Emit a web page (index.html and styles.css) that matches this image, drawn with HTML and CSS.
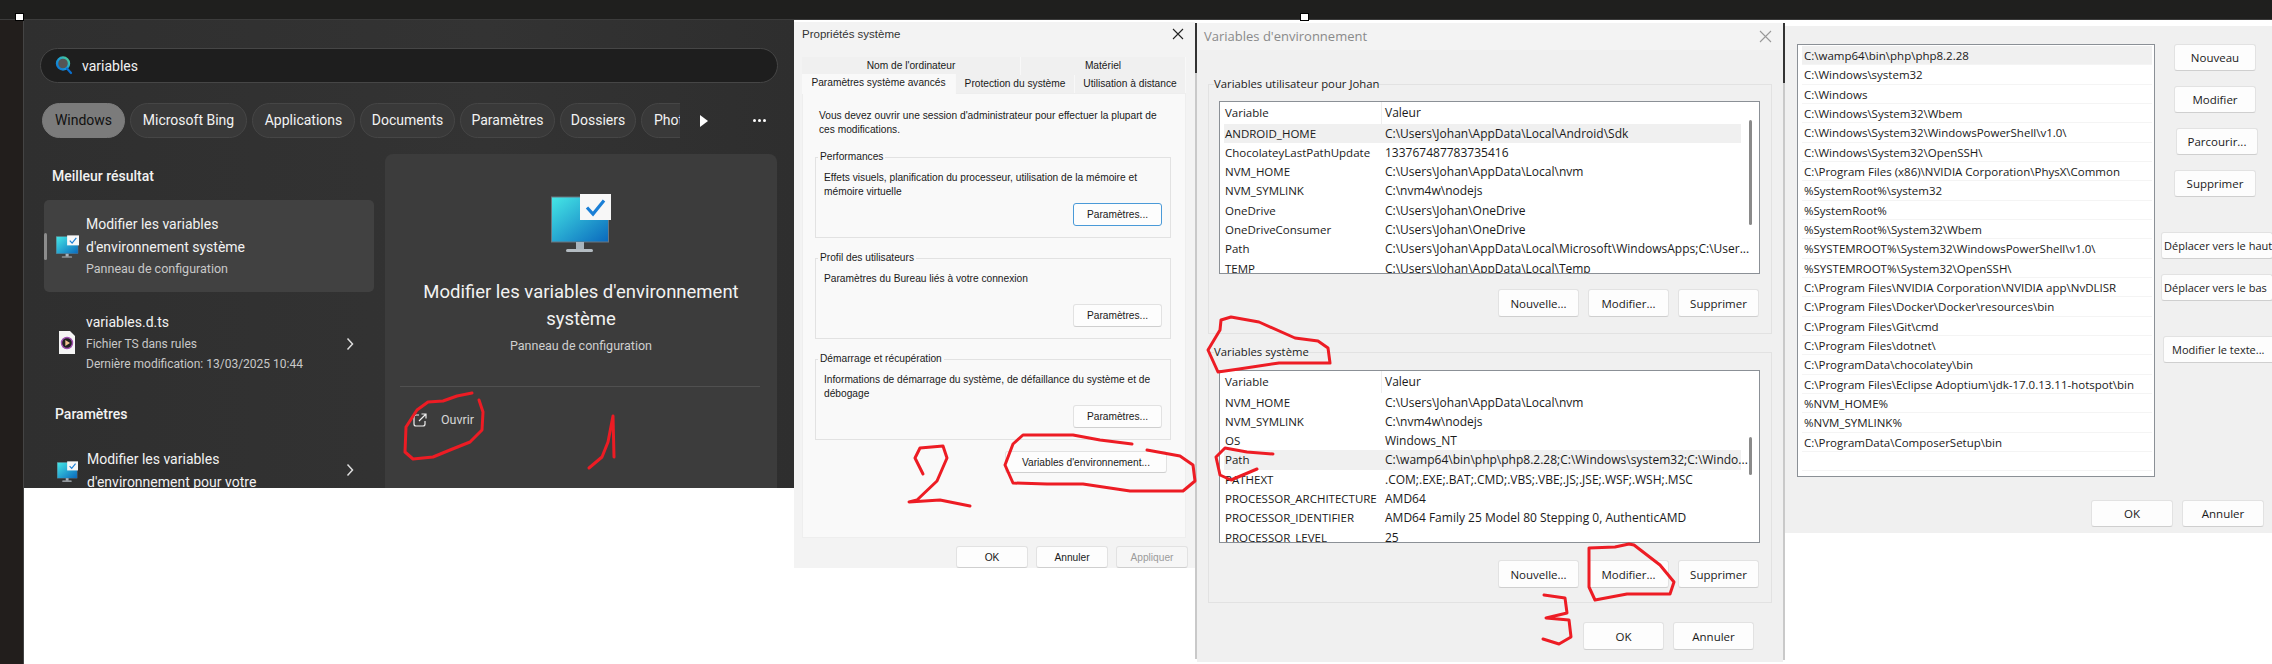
FILE: index.html
```html
<!DOCTYPE html>
<html lang="fr">
<head>
  <meta charset="UTF-8">
  <title>Variables d'environnement</title>
  <link rel="stylesheet" href="styles.css">
</head>
<body>
  <svg class="defs" width="0" height="0">
    <defs>
      <linearGradient id="screen" x1="0" y1="0" x2="1" y2="1">
        <stop offset="0" stop-color="#45e8e6"/>
        <stop offset="1" stop-color="#0a68bd"/>
      </linearGradient>
      <linearGradient id="lens" x1="1" y1="0" x2="0" y2="1">
        <stop offset="0" stop-color="#4fd08a"/>
        <stop offset="0.5" stop-color="#1c9fd8"/>
        <stop offset="1" stop-color="#0a70d0"/>
      </linearGradient>
      <symbol id="monitor" viewBox="0 0 60 58">
        <rect x="0.5" y="3" width="57" height="45" fill="url(#screen)" stroke="#6b7680"/>
        <rect x="25" y="48" width="8" height="7" fill="#a9b4bc"/>
        <rect x="15" y="55" width="27" height="3" rx="1.5" fill="#b4bcc2"/>
        <rect x="29" y="0" width="31" height="26" fill="#f7f7f7"/>
        <path d="M36 13.5 L42 20 L53 6.5" fill="none" stroke="#1a7fd6" stroke-width="3.2"/>
      </symbol>
    </defs>
  </svg>

  <header class="topbar">
    <span class="handle handle-left"></span>
    <span class="handle handle-mid"></span>
  </header>

  <main class="desktop">
    <div class="strip"></div>

    <section class="search-panel">
      <div class="searchbox">
        <svg class="lens" width="20" height="22" viewBox="0 0 20 22">
          <circle cx="9" cy="8.5" r="6" fill="#555" stroke="url(#lens)" stroke-width="2.4"/>
          <path d="M13 13.5 L17 18" stroke="#0a70d0" stroke-width="2.2" stroke-linecap="round"/>
        </svg>
        <span>variables</span>
      </div>

      <div class="chip-row">
        <div class="chips">
          <span class="chip chip-on chip-windows">Windows</span>
          <span class="chip chip-bing">Microsoft Bing</span>
          <span class="chip chip-apps">Applications</span>
          <span class="chip chip-docs">Documents</span>
          <span class="chip chip-params">Paramètres</span>
          <span class="chip chip-dirs">Dossiers</span>
          <span class="chip chip-photos">Photos</span>
        </div>
        <svg class="more-arrow" width="10" height="14" viewBox="0 0 10 14"><path d="M1 1 L9 7 L1 13 Z" fill="#fff"/></svg>
        <span class="more-dots"><i></i><i></i><i></i></span>
      </div>

      <div class="results">
        <div class="res-col">
          <h3 class="res-head">Meilleur résultat</h3>
          <div class="res-card">
            <span class="res-mark"></span>
            <svg class="res-icon" width="23" height="23"><use href="#monitor"/></svg>
            <div class="res-text">
              <div class="res-line">Modifier les variables</div>
              <div class="res-line">d'environnement système</div>
              <div class="res-sub">Panneau de configuration</div>
            </div>
          </div>

          <div class="res-item res-file">
            <svg class="file-icon" width="16" height="23" viewBox="0 0 16 23">
              <path d="M0 0 H11 L16 5 V23 H0 Z" fill="#f5f5f5"/>
              <circle cx="8" cy="12" r="5.5" fill="#222" stroke="#a050b0" stroke-width="1.4"/>
              <path d="M6.3 9 L11 12 L6.3 15 Z" fill="#f0c090"/>
            </svg>
            <div class="res-text">
              <div class="res-line">variables.d.ts</div>
              <div class="res-sub">Fichier TS dans rules</div>
              <div class="res-sub">Dernière modification: 13/03/2025 10:44</div>
            </div>
            <svg class="chev" width="8" height="14" viewBox="0 0 8 14"><path d="M1.5 1.5 L6.5 7 L1.5 12.5" fill="none" stroke="#ddd" stroke-width="1.5"/></svg>
          </div>

          <h3 class="res-head2">Paramètres</h3>
          <div class="res-item res-env">
            <svg class="res-icon" width="21" height="23"><use href="#monitor"/></svg>
            <div class="res-text">
              <div class="res-line">Modifier les variables</div>
              <div class="res-line">d'environnement pour votre</div>
            </div>
            <svg class="chev" width="8" height="14" viewBox="0 0 8 14"><path d="M1.5 1.5 L6.5 7 L1.5 12.5" fill="none" stroke="#ddd" stroke-width="1.5"/></svg>
          </div>
        </div>

        <div class="preview">
          <svg class="preview-icon" width="60" height="58"><use href="#monitor"/></svg>
          <div class="preview-title">Modifier les variables d'environnement système</div>
          <div class="preview-sub">Panneau de configuration</div>
          <div class="preview-rule"></div>
          <div class="preview-open">
            <svg width="14" height="14" viewBox="0 0 14 14">
              <path d="M6 2 H3 a2 2 0 0 0 -2 2 V11 a2 2 0 0 0 2 2 H10 a2 2 0 0 0 2 -2 V8" fill="none" stroke="#eee" stroke-width="1.2"/>
              <path d="M6 8 L13 1 M8.5 1 H13 V5.5" fill="none" stroke="#eee" stroke-width="1.2"/>
            </svg>
            <span>Ouvrir</span>
          </div>
        </div>
      </div>
    </section>

    <section class="dlg sys">
      <div class="dlg-title">
        <span>Propriétés système</span>
        <svg width="12" height="12" viewBox="0 0 12 12"><path d="M1 1 L11 11 M11 1 L1 11" stroke="#222" stroke-width="1.1"/></svg>
      </div>
      <div class="tabs">
        <div class="tabrow">
          <span class="tab tab-name">Nom de l'ordinateur</span>
          <span class="tab tab-hw">Matériel</span>
        </div>
        <div class="tabrow">
          <span class="tab tab-on">Paramètres système avancés</span>
          <span class="tab tab-prot">Protection du système</span>
          <span class="tab tab-rem">Utilisation à distance</span>
        </div>
      </div>
      <div class="tabpane">
        <p class="intro">Vous devez ouvrir une session d'administrateur pour effectuer la plupart de ces modifications.</p>
        <fieldset class="grp">
          <legend>Performances</legend>
          <p class="grp-text">Effets visuels, planification du processeur, utilisation de la mémoire et mémoire virtuelle</p>
          <div class="grp-foot"><button class="btn btn-sys btn-focus">Paramètres...</button></div>
        </fieldset>
        <fieldset class="grp">
          <legend>Profil des utilisateurs</legend>
          <p class="grp-text">Paramètres du Bureau liés à votre connexion</p>
          <div class="grp-foot"><button class="btn btn-sys">Paramètres...</button></div>
        </fieldset>
        <fieldset class="grp">
          <legend>Démarrage et récupération</legend>
          <p class="grp-text">Informations de démarrage du système, de défaillance du système et de débogage</p>
          <div class="grp-foot"><button class="btn btn-sys">Paramètres...</button></div>
        </fieldset>
        <div class="env-row"><button class="btn btn-env">Variables d'environnement...</button></div>
      </div>
      <div class="dlg-foot sys-foot">
        <button class="btn btn-sys-foot">OK</button>
        <button class="btn btn-sys-foot">Annuler</button>
        <button class="btn btn-sys-foot btn-off">Appliquer</button>
      </div>
    </section>

    <div class="sep sep-a"></div>

    <section class="dlg env">
      <div class="dlg-title env-title">
        <span>Variables d'environnement</span>
        <svg width="13" height="13" viewBox="0 0 13 13"><path d="M1 1 L12 12 M12 1 L1 12" stroke="#999" stroke-width="1.1"/></svg>
      </div>

      <fieldset class="env-grp env-user">
        <legend>Variables utilisateur pour Johan</legend>
        <div class="vars">
          <div class="vars-head"><span class="col-var">Variable</span><span>Valeur</span></div>
          <div class="vars-row vars-sel"><span class="col-var">ANDROID_HOME</span><span>C:\Users\Johan\AppData\Local\Android\Sdk</span></div>
          <div class="vars-row"><span class="col-var">ChocolateyLastPathUpdate</span><span>133767487783735416</span></div>
          <div class="vars-row"><span class="col-var">NVM_HOME</span><span>C:\Users\Johan\AppData\Local\nvm</span></div>
          <div class="vars-row"><span class="col-var">NVM_SYMLINK</span><span>C:\nvm4w\nodejs</span></div>
          <div class="vars-row"><span class="col-var">OneDrive</span><span>C:\Users\Johan\OneDrive</span></div>
          <div class="vars-row"><span class="col-var">OneDriveConsumer</span><span>C:\Users\Johan\OneDrive</span></div>
          <div class="vars-row"><span class="col-var">Path</span><span>C:\Users\Johan\AppData\Local\Microsoft\WindowsApps;C:\User...</span></div>
          <div class="vars-row"><span class="col-var">TEMP</span><span>C:\Users\Johan\AppData\Local\Temp</span></div>
          <span class="thumb thumb-user"></span>
        </div>
        <div class="env-btns">
          <button class="btn btn-env-act">Nouvelle...</button>
          <button class="btn btn-env-act">Modifier...</button>
          <button class="btn btn-env-act">Supprimer</button>
        </div>
      </fieldset>

      <fieldset class="env-grp env-sys">
        <legend>Variables système</legend>
        <div class="vars">
          <div class="vars-head"><span class="col-var">Variable</span><span>Valeur</span></div>
          <div class="vars-row"><span class="col-var">NVM_HOME</span><span>C:\Users\Johan\AppData\Local\nvm</span></div>
          <div class="vars-row"><span class="col-var">NVM_SYMLINK</span><span>C:\nvm4w\nodejs</span></div>
          <div class="vars-row"><span class="col-var">OS</span><span>Windows_NT</span></div>
          <div class="vars-row vars-sel"><span class="col-var">Path</span><span>C:\wamp64\bin\php\php8.2.28;C:\Windows\system32;C:\Windo...</span></div>
          <div class="vars-row"><span class="col-var">PATHEXT</span><span>.COM;.EXE;.BAT;.CMD;.VBS;.VBE;.JS;.JSE;.WSF;.WSH;.MSC</span></div>
          <div class="vars-row"><span class="col-var">PROCESSOR_ARCHITECTURE</span><span>AMD64</span></div>
          <div class="vars-row"><span class="col-var">PROCESSOR_IDENTIFIER</span><span>AMD64 Family 25 Model 80 Stepping 0, AuthenticAMD</span></div>
          <div class="vars-row"><span class="col-var">PROCESSOR_LEVEL</span><span>25</span></div>
          <span class="thumb thumb-sys"></span>
        </div>
        <div class="env-btns">
          <button class="btn btn-env-act">Nouvelle...</button>
          <button class="btn btn-env-act">Modifier...</button>
          <button class="btn btn-env-act">Supprimer</button>
        </div>
      </fieldset>

      <div class="dlg-foot env-foot">
        <button class="btn btn-env-act">OK</button>
        <button class="btn btn-env-act">Annuler</button>
      </div>
    </section>

    <div class="sep sep-b"></div>

    <section class="dlg path">
      <div class="path-main">
        <ul class="paths">
          <li class="path-sel">C:\wamp64\bin\php\php8.2.28</li>
          <li>C:\Windows\system32</li>
          <li>C:\Windows</li>
          <li>C:\Windows\System32\Wbem</li>
          <li>C:\Windows\System32\WindowsPowerShell\v1.0\</li>
          <li>C:\Windows\System32\OpenSSH\</li>
          <li>C:\Program Files (x86)\NVIDIA Corporation\PhysX\Common</li>
          <li>%SystemRoot%\system32</li>
          <li>%SystemRoot%</li>
          <li>%SystemRoot%\System32\Wbem</li>
          <li>%SYSTEMROOT%\System32\WindowsPowerShell\v1.0\</li>
          <li>%SYSTEMROOT%\System32\OpenSSH\</li>
          <li>C:\Program Files\NVIDIA Corporation\NVIDIA app\NvDLISR</li>
          <li>C:\Program Files\Docker\Docker\resources\bin</li>
          <li>C:\Program Files\Git\cmd</li>
          <li>C:\Program Files\dotnet\</li>
          <li>C:\ProgramData\chocolatey\bin</li>
          <li>C:\Program Files\Eclipse Adoptium\jdk-17.0.13.11-hotspot\bin</li>
          <li>%NVM_HOME%</li>
          <li>%NVM_SYMLINK%</li>
          <li>C:\ProgramData\ComposerSetup\bin</li>
          <li>&nbsp;</li>
        </ul>
        <div class="path-side">
          <button class="btn btn-path">Nouveau</button>
          <button class="btn btn-path">Modifier</button>
          <button class="btn btn-path btn-browse">Parcourir...</button>
          <button class="btn btn-path">Supprimer</button>
          <button class="btn btn-move btn-up">Déplacer vers le haut</button>
          <button class="btn btn-move btn-down">Déplacer vers le bas</button>
          <button class="btn btn-move btn-text">Modifier le texte...</button>
        </div>
      </div>
      <div class="dlg-foot path-foot">
        <button class="btn btn-path">OK</button>
        <button class="btn btn-path">Annuler</button>
      </div>
    </section>
  </main>

  <!-- red marker notes drawn on top of the screenshots -->
  <svg class="marker" width="2272" height="664" viewBox="0 0 2272 664">
    <g fill="none" stroke="#ed1c24" stroke-width="3" stroke-linecap="round" stroke-linejoin="round">
      <path d="M472 393 L457 396 L443 401 L428 402 L417 410 L406 427 L405 452 L413 459 L433 457 L450 450 L470 442 L482 430 L483 412 L479 400"/>
      <path d="M614 457 L613 416 L608 442 L602 457 L589 468"/>
      <path d="M923 474 L915 458 L920 448 L943 446 L947 458 L937 481 L917 500 L909 502 L940 500 L970 506"/>
      <path d="M1132 444 L1100 440 L1073 435 L1023 435 L1013 444 L1005 465 L1013 483 L1047 484 L1083 484 L1130 491 L1183 491 L1195 481 L1193 465 L1180 456 L1147 450"/>
      <path d="M1330 363 L1279 363 L1239 369 L1218 372 L1208 350 L1220 330 L1221 320 L1231 317 L1259 322 L1295 338 L1318 341 L1328 348 L1330 363"/>
      <path d="M1273 454 L1247 452 L1225 448 L1216 457 L1220 475 L1231 480 L1257 469"/>
      <path d="M1629 544 L1615 547 L1589 548 L1589 587 L1595 600 L1627 594 L1670 594 L1674 582 L1660 565 L1634 545 L1629 544"/>
      <path d="M1544 595 L1565 598 L1567 613 L1546 618 L1569 620 L1571 637 L1559 644 L1543 639"/>
    </g>
  </svg>
</body>
</html>
```

FILE: styles.css
```css
* {
  box-sizing: border-box;
}
html, body {
  margin: 0;
  height: 664px;
}
body {
  width: 2272px;
  position: relative;
  overflow: hidden;
  background: #fff;
  font-family: "Open Sans", "Noto Sans", sans-serif;
}
h3, p, ul {
  margin: 0;
  padding: 0;
}
.defs {
  position: absolute;
}
.marker {
  position: absolute;
  left: 0;
  top: 0;
  pointer-events: none;
}

.topbar {
  height: 20px;
  background: #1f1f1e;
  border-bottom: 1px solid #3c3c3c;
}
.handle {
  position: absolute;
  top: 13px;
  width: 9px;
  height: 8px;
  background: #fff;
  border: 1px solid #000;
  z-index: 2;
}
.handle-left {
  left: 15px;
}
.handle-mid {
  left: 1300px;
}

.desktop {
  display: flex;
  align-items: flex-start;
}
.strip {
  width: 24px;
  height: 644px;
  background: #221e1c;
  border-right: 1px solid #444;
}

/* search window */
.search-panel {
  width: 770px;
  height: 468px;
  padding: 28px 16px 0;
  overflow: hidden;
  background: linear-gradient(90deg, #2f2f2f, #333 60%, #2e2e2e);
  color: #f2f2f2;
  font-family: Roboto, "Noto Sans", sans-serif;
}
.searchbox {
  height: 35px;
  width: 738px;
  display: flex;
  align-items: center;
  padding-left: 13px;
  border: 1px solid #464646;
  border-radius: 18px;
  background: #1e1e1e;
  font-size: 14px;
}
.searchbox span {
  margin-left: 8px;
}
.chip-row {
  display: flex;
  align-items: center;
  margin-top: 20px;
  padding-left: 2px;
  height: 35px;
}
.chips {
  display: flex;
  gap: 5px;
  width: 638px;
  overflow: hidden;
}
.chip {
  flex: none;
  height: 35px;
  line-height: 33px;
  text-align: center;
  border: 1px solid #464646;
  border-radius: 18px;
  background: #393939;
  font-size: 14px;
}
.chip-on {
  background: #7b7b7b;
  border-color: #7b7b7b;
  color: #111;
}
.chip-windows { width: 83px; }
.chip-bing { width: 117px; }
.chip-apps { width: 103px; }
.chip-docs { width: 95px; }
.chip-params { width: 95px; }
.chip-dirs { width: 76px; }
.chip-photos {
  width: 70px;
  text-align: left;
  padding-left: 12px;
}
.more-arrow {
  margin-left: 19px;
}
.more-dots {
  display: flex;
  gap: 2px;
  margin-left: 44px;
}
.more-dots i {
  width: 3px;
  height: 3px;
  border-radius: 50%;
  background: #fff;
}
.results {
  display: flex;
  margin-top: 16px;
}
.res-col {
  width: 330px;
  margin-left: 4px;
}
.res-head, .res-head2 {
  font-size: 14px;
  font-weight: 500;
}
.res-head {
  height: 46px;
  line-height: 44px;
  padding-left: 8px;
}
.res-card {
  position: relative;
  height: 92px;
  display: flex;
  align-items: center;
  padding-left: 12px;
  background: #414141;
  border-radius: 5px;
}
.res-mark {
  position: absolute;
  left: 0;
  top: 33px;
  width: 3px;
  height: 27px;
  border-radius: 2px;
  background: #8c8c8c;
}
.res-text {
  margin-left: 7px;
}
.res-line {
  font-size: 14px;
  line-height: 23px;
  white-space: nowrap;
}
.res-sub {
  font-size: 12.5px;
  line-height: 20px;
  color: #c8c8c8;
  white-space: nowrap;
}
.res-item {
  display: flex;
  align-items: center;
  position: relative;
}
.res-file {
  margin-top: 19px;
  padding-left: 15px;
}
.res-file .res-text {
  margin-left: 11px;
}
.res-file .res-sub {
  font-size: 12px;
}
.res-head2 {
  margin-top: 30px;
  padding-left: 11px;
  line-height: 20px;
}
.res-env {
  margin-top: 24px;
  padding-left: 13px;
}
.res-env .res-text {
  margin-left: 9px;
}
.chev {
  position: absolute;
  left: 302px;
  top: 26px;
}
.res-env .chev {
  top: 15px;
}
.preview {
  width: 392px;
  height: 340px;
  margin-left: 11px;
  padding-top: 40px;
  display: flex;
  flex-direction: column;
  align-items: center;
  background: #3c3c3c;
  border-radius: 8px 8px 0 0;
}
.preview-title {
  width: 340px;
  margin-top: 27px;
  text-align: center;
  font-size: 18.5px;
  line-height: 27px;
}
.preview-sub {
  margin-top: 3px;
  font-size: 12.5px;
  line-height: 20px;
  color: #cfcfcf;
}
.preview-rule {
  align-self: stretch;
  height: 1px;
  margin: 30px 17px 0 15px;
  background: #505050;
}
.preview-open {
  align-self: flex-start;
  display: flex;
  align-items: center;
  gap: 14px;
  margin: 25px 0 0 28px;
  font-size: 12.5px;
  color: #d6d6d6;
}

/* classic dialogs */
.dlg {
  color: #1a1a1a;
  font-size: 12px;
}
.btn {
  padding: 0;
  background: #fdfdfd;
  border: 1px solid #e2e2e2;
  border-bottom-color: #cfcfcf;
  border-radius: 3px;
  font-family: inherit;
  font-size: inherit;
  color: #1a1a1a;
  white-space: nowrap;
}
.dlg-title {
  display: flex;
  align-items: center;
  justify-content: space-between;
}
.dlg-foot {
  display: flex;
  justify-content: flex-end;
}

.sys {
  width: 401px;
  height: 546px;
  margin-top: 2px;
  background: #f3f3f3;
  font-family: "Liberation Sans", Arial, sans-serif;
  font-size: 10.2px;
}
.sys .dlg-title {
  height: 23px;
  padding: 0 11px 0 8px;
  font-size: 11.5px;
  color: #333;
}
.tabs {
  margin: 12px 9px 0 8px;
}
.tabrow {
  display: flex;
  height: 18px;
}
.tab {
  line-height: 18px;
  text-align: center;
  background: #f0f0f0;
  border-right: 1px solid #f8f8f8;
  white-space: nowrap;
}
.tab-name { width: 219px; }
.tab-hw { width: 165px; }
.tab-on {
  width: 154px;
  margin-top: -1px;
  height: 20px;
  background: #f9f9f9;
  z-index: 1;
}
.tab-prot { width: 119px; }
.tab-rem { width: 111px; }
.tabpane {
  width: 384px;
  height: 445px;
  margin-left: 8px;
  padding: 15px 16px 0 12px;
  background: #f9f9f9;
  border: 1px solid #eeeeee;
}
.intro {
  padding-left: 4px;
  line-height: 14px;
  width: 356px;
}
.grp {
  width: 356px;
  height: 88px;
  margin: 13px 0 0;
  padding: 7px 8px 0 8px;
  border: 1px solid #e2e2e2;
  min-width: 0;
}
.grp legend {
  margin-left: -6px;
  padding: 0 2px;
  line-height: 14px;
}
.grp-text {
  height: 32px;
  line-height: 14px;
}
.grp-foot {
  display: flex;
  justify-content: flex-end;
}
.btn-sys {
  width: 89px;
  height: 23px;
}
.btn-focus {
  border-color: #4a9ad8;
}
.env-row {
  display: flex;
  justify-content: flex-end;
  margin-top: 11px;
  padding-right: 2px;
}
.btn-env {
  width: 162px;
  height: 22px;
}
.sys-foot {
  gap: 8px;
  margin-top: 8px;
  padding-right: 7px;
}
.btn-sys-foot {
  width: 72px;
  height: 22px;
}
.btn-off {
  color: #9b9b9b;
  background: #f6f6f6;
}

.sep {
  width: 2px;
  margin-top: 3px;
}
.sep-a {
  height: 636px;
  background: linear-gradient(#333 0 50px, #c9c9c9 50px);
}
.sep-b {
  height: 637px;
  background: linear-gradient(#333 0 60px, #c9c9c9 60px);
}

.env {
  width: 586px;
  height: 639px;
  margin-top: 3px;
  background: #f0f0f0;
}
.env-title {
  height: 27px;
  padding: 0 11px 1px 7px;
  background: #f3f3f3;
  font-size: 13px;
  color: #8a8a8a;
}
.env-grp {
  width: 564px;
  min-width: 0;
  margin: 0 0 0 11px;
  padding: 10px 11px 0 10px;
  border: 1px solid #e2e2e2;
}
.env-grp legend {
  margin-left: -5px;
  padding: 0;
  font-size: 11.3px;
  line-height: 14px;
}
.env-user {
  margin-top: 27px;
  height: 257px;
}
.env-sys {
  margin-top: 11px;
  height: 258px;
  padding-top: 11px;
}
.vars {
  position: relative;
  height: 173px;
  padding-left: 4px;
  overflow: hidden;
  background: #fff;
  border: 1px solid #8b9096;
}
.vars-head {
  display: flex;
  height: 21.5px;
  line-height: 22px;
  width: 517px;
}
.vars-head .col-var {
  width: 158px;
  margin-right: 3px;
  border-right: 1px solid #eee;
}
.vars-row {
  display: flex;
  height: 19.33px;
  line-height: 19px;
  width: 517px;
  white-space: nowrap;
}
.vars-sel {
  background: #f0f0f0;
}
.col-var {
  flex: none;
  width: 161px;
  padding-left: 1px;
  font-size: 11.5px;
}
.thumb {
  position: absolute;
  left: 529px;
  width: 3px;
  background: #8a8a8a;
  border-radius: 2px;
}
.thumb-user {
  top: 18px;
  height: 105px;
}
.thumb-sys {
  top: 66px;
  height: 38px;
}
.env-btns {
  display: flex;
  justify-content: flex-end;
  gap: 9px;
  margin-top: 15px;
  padding-right: 1px;
}
.env-sys .env-btns {
  margin-top: 17px;
}
.btn-env-act {
  width: 81px;
  height: 28px;
  font-size: 11.5px;
}
.env-foot {
  gap: 9px;
  margin-top: 19px;
  padding-right: 29px;
}

.path {
  flex: none;
  width: 487px;
  height: 507px;
  margin-top: 6px;
  background: #f0f0f0;
  font-size: 11.5px;
  overflow: hidden;
}
.path-main {
  display: flex;
  padding: 18px 0 0 12px;
}
.paths {
  flex: none;
  width: 358px;
  height: 433px;
  padding: 1px 2px 0 4px;
  list-style: none;
  overflow: hidden;
  background: #fff;
  border: 1px solid #8b9096;
}
.paths li {
  height: 19.33px;
  line-height: 19px;
  padding-left: 2px;
  border-bottom: 1px solid #f4f4f4;
  white-space: nowrap;
}
.path-sel {
  background: #f0f0f0;
}
.path-side {
  display: flex;
  flex-direction: column;
  align-items: flex-start;
  flex: none;
  width: 118px;
}
.btn-path {
  width: 82px;
  height: 27px;
  flex: none;
}
.path-side .btn-path {
  margin: 0 0 15px 19px;
}
.path-side .btn-browse {
  margin-left: 21px;
}
.btn-move {
  width: 112px;
  height: 27px;
  flex: none;
  font-size: 11px;
  text-align: left;
  padding-left: 2px;
}
.btn-up {
  margin: 20px 0 0 6px;
}
.btn-down {
  margin: 15px 0 0 6px;
}
.btn-text {
  margin: 35px 0 0 8px;
  padding-left: 8px;
}
.path-foot {
  gap: 9px;
  margin-top: 23px;
  padding-right: 8px;
}
```
